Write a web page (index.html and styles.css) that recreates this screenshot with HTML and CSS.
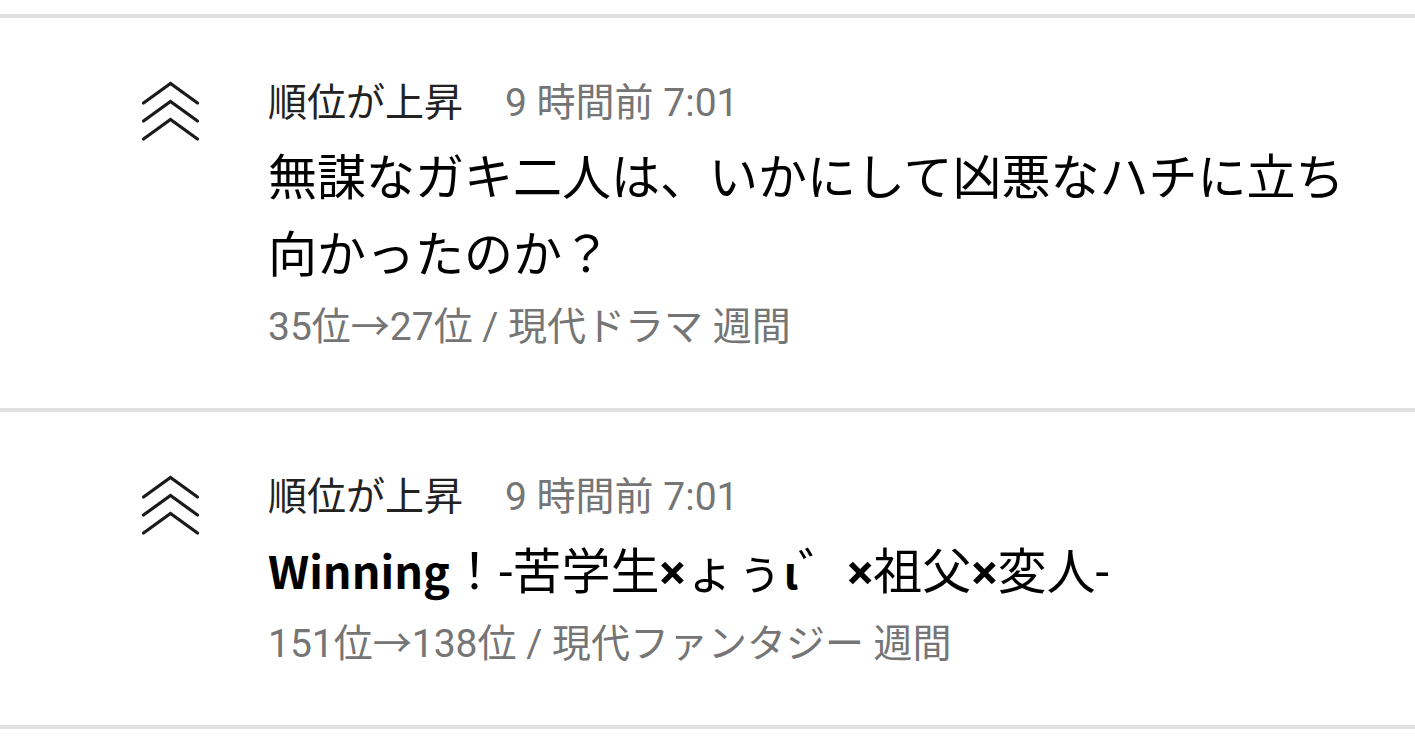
FILE: index.html
```html
<!DOCTYPE html>
<html lang="ja">
<head>
<meta charset="utf-8">
<link rel="stylesheet" href="styles.css">
</head>
<body>
<div class="list">
  <div class="divider"></div>
  <div class="item">
    <div class="icon">
      <svg width="60" height="64" viewBox="0 0 60 64" fill="none" stroke="#1a1a1a" stroke-width="3.2" stroke-linecap="round" stroke-linejoin="miter">
        <path d="M3.5 23 L30.5 3.5 L57.5 23"/>
        <path d="M3.5 41 L30.5 21.5 L57.5 41"/>
        <path d="M3.5 59 L30.5 39.5 L57.5 59"/>
      </svg>
    </div>
    <div class="body">
      <div class="head"><span class="label">順位が上昇</span><span class="time">9 時間前 7:01</span></div>
      <div class="title">無謀なガキ二人は、いかにして凶悪なハチに立ち向かったのか？</div>
      <div class="sub">35位→27位 / 現代ドラマ 週間</div>
    </div>
  </div>
  <div class="divider"></div>
  <div class="item">
    <div class="icon">
      <svg width="60" height="64" viewBox="0 0 60 64" fill="none" stroke="#1a1a1a" stroke-width="3.2" stroke-linecap="round" stroke-linejoin="miter">
        <path d="M3.5 23 L30.5 3.5 L57.5 23"/>
        <path d="M3.5 41 L30.5 21.5 L57.5 41"/>
        <path d="M3.5 59 L30.5 39.5 L57.5 59"/>
      </svg>
    </div>
    <div class="body">
      <div class="head"><span class="label">順位が上昇</span><span class="time">9 時間前 7:01</span></div>
      <div class="title"><span class="lat">Winning</span>！-苦学生<span class="mul">×</span>ょぅ<span class="lat">ι</span>゛<span class="mul">×</span>祖父<span class="mul">×</span>変人-</div>
      <div class="sub">151位→138位 / 現代ファンタジー 週間</div>
    </div>
  </div>
  <div class="divider"></div>
</div>
</body>
</html>
```

FILE: styles.css
```css
html, body {
  margin: 0;
  padding: 0;
  background: #ffffff;
}
body {
  font-family: Roboto, "Noto Sans CJK JP", sans-serif;
  color: #000;
}
.list {
  padding-top: 14px;
}
.divider {
  height: 4px;
  background: #e0e0e0;
}
.item {
  display: flex;
  align-items: flex-start;
  padding: 48px 48px 48px 140px;
}
.icon {
  width: 60px;
  height: 64px;
  margin-top: 14px;
  margin-right: 68px;
  flex-shrink: 0;
}
.icon svg {
  display: block;
}
.body {
  flex: 1;
  min-width: 0;
}
.head {
  font-size: 39px;
  line-height: 74px;
  white-space: nowrap;
}
.label {
  color: #222;
}
.time {
  color: #757575;
  margin-left: 42px;
}
.title {
  font-size: 49px;
  line-height: 77px;
  color: #000;
}
.lat {
  font-family: "Noto Sans CJK JP", sans-serif;
  font-weight: 700;
  font-size: 45px;
  line-height: 1;
}
.mul {
  font-weight: 700;
  line-height: 1;
}
.sub {
  font-size: 39px;
  line-height: 66px;
  color: #757575;
}
```
